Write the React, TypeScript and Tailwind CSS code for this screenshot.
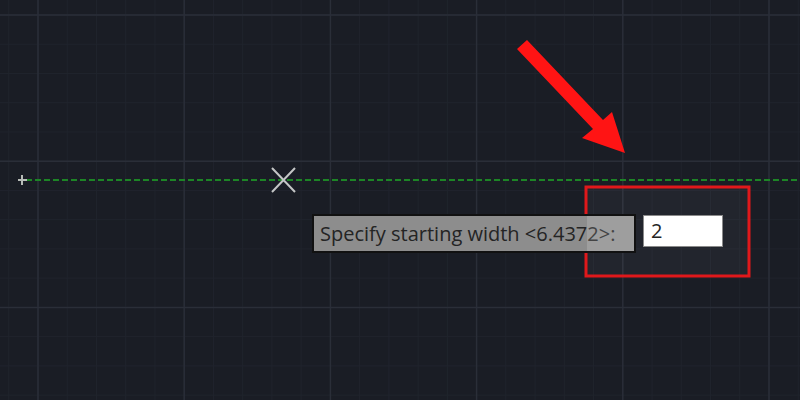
import React from "react";

const MAJOR = 146.2;
const MINOR = MAJOR / 5;

function Grid() {
  const minorX: number[] = [];
  const minorY: number[] = [];
  for (let x = 38 - MAJOR; x < 800; x += MINOR) minorX.push(x);
  for (let y = 15 - MAJOR; y < 400; y += MINOR) minorY.push(y);
  const majorX = [38, 38 + MAJOR, 38 + 2 * MAJOR, 38 + 3 * MAJOR, 38 + 4 * MAJOR, 38 + 5 * MAJOR];
  const majorY = [15, 15 + MAJOR, 15 + 2 * MAJOR];

  return (
    <svg width="800" height="400" className="absolute inset-0">
      {minorX.map((x, i) => (
        <line key={"mx" + i} x1={x} y1={0} x2={x} y2={400} stroke="#20242d" strokeWidth={1} />
      ))}
      {minorY.map((y, i) => (
        <line key={"my" + i} x1={0} y1={y} x2={800} y2={y} stroke="#20242d" strokeWidth={1} />
      ))}
      {majorX.map((x, i) => (
        <line key={"Mx" + i} x1={x} y1={0} x2={x} y2={400} stroke="#2a2e38" strokeWidth={1.5} />
      ))}
      {majorY.map((y, i) => (
        <line key={"My" + i} x1={0} y1={y} x2={800} y2={y} stroke="#2a2e38" strokeWidth={1.5} />
      ))}

      {/* polyline rubber band */}
      <line x1={26} y1={180} x2={800} y2={180} stroke="#1d8526" strokeWidth={2} strokeDasharray="6 3" />

      {/* start point marker */}
      <path d="M18 180 H27 M22 175 V185" stroke="#b8bcb8" strokeWidth={2} />

      {/* cursor cross */}
      <path d="M272 168 L295 192 M295 168 L272 192" stroke="#c4c6c6" strokeWidth={2} />

      {/* red highlight box */}
      <rect x={586} y={187} width={163} height={89} fill="rgba(255,255,255,0.04)" stroke="#e0181b" strokeWidth={3} />

      {/* arrow */}
      <polygon
        points="517,49 527,40 603,120 612,112 625,153 582,138 593,129"
        fill="#ff1414"
      />
    </svg>
  );
}

export default function App() {
  return (
    <div className="relative w-[800px] h-[400px] overflow-hidden bg-[#1a1d25]">
      <Grid />

      {/* dynamic input prompt */}
      <div className="absolute left-[312px] top-[214px] flex items-start gap-[7px]">
        <div className="w-[324px] h-[39px] border-2 border-[#111] bg-[#8d8d8d] pl-[6px] flex items-center text-[20px] text-[#242424] font-['Open_Sans',sans-serif] leading-none">
          Specify starting width &lt;6.4372&gt;:
        </div>
        <div className="mt-[1px] w-[80px] h-[32px] border border-[#8a8a8a] bg-white pl-[7px] flex items-center text-[20px] text-[#242424] font-['Open_Sans',sans-serif] leading-none">
          2
        </div>
      </div>

      {/* lighten label part inside box */}
      <div className="absolute left-[587px] top-[216px] w-[47px] h-[35px] bg-white/15" />
    </div>
  );
}
